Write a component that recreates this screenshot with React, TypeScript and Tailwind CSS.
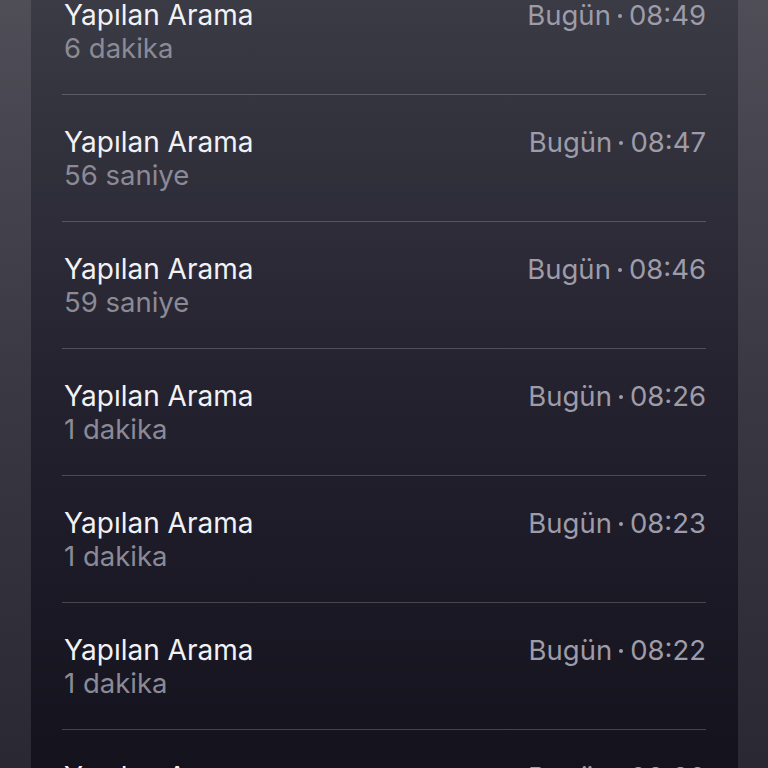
const calls = [
  { title: "Yapılan Arama", duration: "6 dakika", day: "Bugün", time: "08:49" },
  { title: "Yapılan Arama", duration: "56 saniye", day: "Bugün", time: "08:47" },
  { title: "Yapılan Arama", duration: "59 saniye", day: "Bugün", time: "08:46" },
  { title: "Yapılan Arama", duration: "1 dakika", day: "Bugün", time: "08:26" },
  { title: "Yapılan Arama", duration: "1 dakika", day: "Bugün", time: "08:23" },
  { title: "Yapılan Arama", duration: "1 dakika", day: "Bugün", time: "08:22" },
  { title: "Yapılan Arama", duration: "1 dakika", day: "Bugün", time: "08:20" }
];

export default function App() {
  return (
    <div
      className="flex h-[768px] w-[768px] overflow-hidden bg-gradient-to-b from-[#4f4e57] via-[#3a3843] to-[#2a2832]"
      style={{ fontFamily: "Inter, 'Noto Sans', sans-serif" }}
    >
      <div className="w-[31px] shrink-0" />
      <div className="flex-1 overflow-hidden bg-gradient-to-b from-[#3a3b45] via-[#24222f] to-[#14121d] pl-[31px] pr-[32px]">
        <div className="-mt-[32px]">
          {calls.map((call, i) => (
            <div
              key={i}
              className="box-border flex h-[127px] flex-col border-b border-white/20 pt-[31px]"
            >
              <div className="flex h-[33px] items-center justify-between">
                <span className="pl-[2px] text-[28px] leading-[33px] text-[#f2f2f5]">
                  {call.title}
                </span>
                <span className="flex items-center text-[27.5px] leading-[33px] text-[#9d9ca8]">
                  <span>{call.day}</span>
                  <span className="mx-[7px] h-[4px] w-[4px] rounded-full bg-[#9d9ca8]" />
                  <span>{call.time}</span>
                </span>
              </div>
              <div className="h-[33px] pl-[2px] text-[27.5px] leading-[33px] text-[#8b8a95]">
                {call.duration}
              </div>
            </div>
          ))}
        </div>
      </div>
      <div className="w-[30px] shrink-0" />
    </div>
  );
}
